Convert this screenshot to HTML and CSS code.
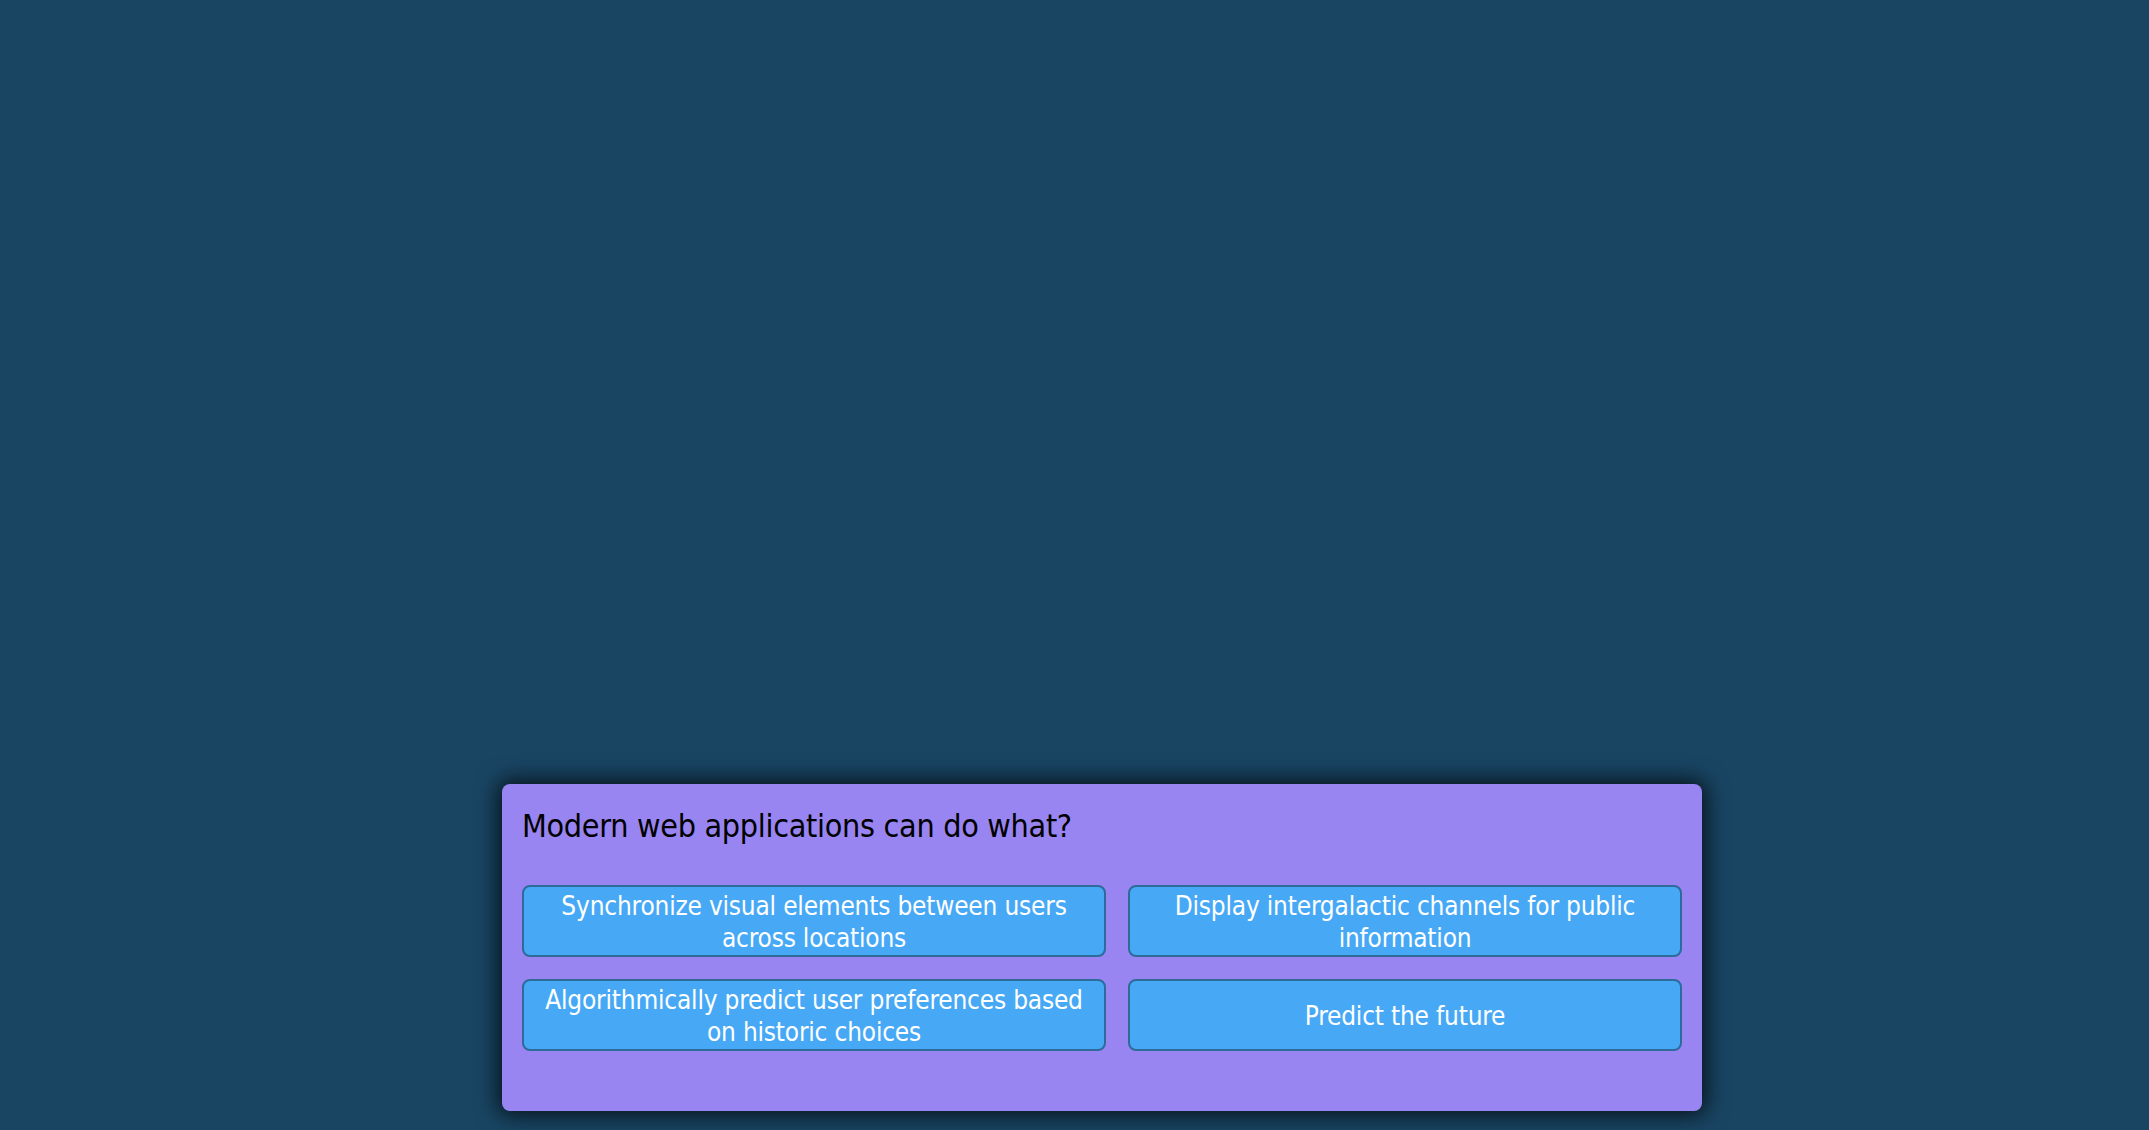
FILE: index.html
```html
<!DOCTYPE html>
<html lang="en">
<head>
<meta charset="utf-8">
<title>Quiz</title>
<link rel="stylesheet" href="styles.css">
</head>
<body>
<main class="stage">
  <section class="card">
    <h2 class="question">Modern web applications can do what?</h2>
    <div class="answers">
      <button class="answer">Synchronize visual elements between users across locations</button>
      <button class="answer">Display intergalactic channels for public information</button>
      <button class="answer">Algorithmically predict user preferences based on historic choices</button>
      <button class="answer">Predict the future</button>
    </div>
  </section>
</main>
</body>
</html>
```
FILE: styles.css
```css
html, body {
  margin: 0;
  height: 100%;
}
body {
  background: #194563;
  font-family: "DejaVu Sans Condensed", "DejaVu Sans", sans-serif;
  font-stretch: condensed;
}
.stage {
  box-sizing: border-box;
  height: 100%;
  display: flex;
  flex-direction: column;
  justify-content: flex-end;
  padding: 0 447px 19px 502px;
}
.card {
  background: #9885f1;
  border-radius: 8px;
  padding: 20px 20px 60px;
  box-shadow: 0 0 22px 4px rgba(0, 0, 0, 0.75);
}
.question {
  margin: 0 0 39px;
  padding-top: 2px;
  font-size: 32px;
  line-height: 40px;
  letter-spacing: -0.3px;
  font-weight: normal;
  color: #000;
}
.answers {
  display: grid;
  grid-template-columns: 584fr 554fr;
  gap: 22px;
}
.answer {
  display: flex;
  align-items: center;
  justify-content: center;
  box-sizing: border-box;
  min-height: 72px;
  padding: 3px 8px 1px;
  background: #47a9f6;
  border: 2px solid #2e6a9a;
  border-radius: 8px;
  color: #fff;
  font-family: inherit;
  font-stretch: condensed;
  font-size: 26px;
  line-height: 32px;
  letter-spacing: -0.2px;
  text-align: center;
}
```
